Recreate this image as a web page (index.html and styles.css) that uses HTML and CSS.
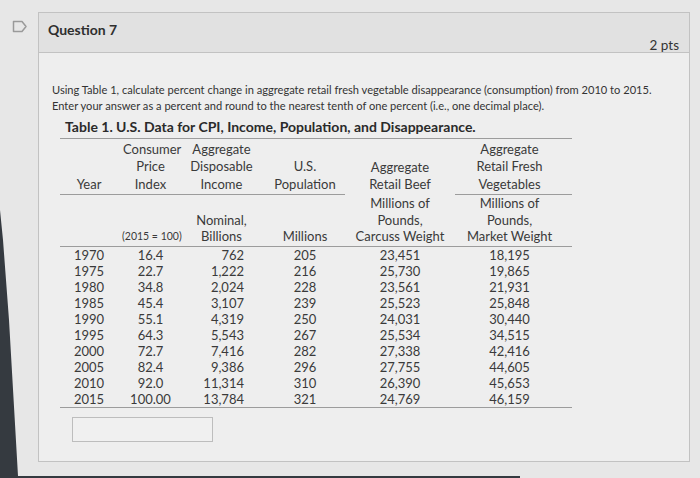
FILE: index.html
```html
<!DOCTYPE html>
<html>
<head>
<meta charset="utf-8">
<link rel="stylesheet" href="styles.css">
</head>
<body>
<div class="page">
  <div class="gutter">
    <svg class="flag" width="16" height="13" viewBox="0 0 16 13">
      <path d="M1.5 1.5 H10 L14 6.5 L10 11.5 H1.5 Z" fill="none" stroke="#9a9a9a" stroke-width="1.5" stroke-linejoin="round"/>
    </svg>
  </div>
  <div class="card">
    <div class="card-head">
      <span class="q-title">Question 7</span>
      <span class="q-pts">2 pts</span>
    </div>
    <div class="card-body">
      <p class="prompt">Using Table 1, calculate percent change in aggregate retail fresh vegetable disappearance (consumption) from 2010 to 2015.<br>Enter your answer as a percent and round to the nearest tenth of one percent (i.e., one decimal place).</p>
      <div class="tbl-title">Table 1. U.S. Data for CPI, Income, Population, and Disappearance.</div>
      <table class="data">
        <colgroup>
          <col class="c-year"><col class="c-cpi"><col class="c-inc"><col class="c-pop"><col class="c-beef"><col class="c-veg">
        </colgroup>
        <thead>
          <tr class="h1">
            <th>Year</th>
            <th class="cpi">Consumer<br>Price<br>Index</th>
            <th>Aggregate<br>Disposable<br>Income</th>
            <th>U.S.<br>Population</th>
            <th class="nb">Aggregate<br>Retail Beef</th>
            <th class="veg">Aggregate<br>Retail Fresh<br>Vegetables</th>
          </tr>
          <tr class="h2">
            <th></th>
            <th class="small">(2015 = 100)</th>
            <th>Nominal,<br>Billions</th>
            <th>Millions</th>
            <th>Millions of<br>Pounds,<br>Carcuss Weight</th>
            <th class="veg">Millions of<br>Pounds,<br>Market Weight</th>
          </tr>
        </thead>
        <tbody>
          <tr><td>1970</td><td class="cpi">16.4</td><td class="r">762</td><td>205</td><td>23,451</td><td class="veg">18,195</td></tr>
          <tr><td>1975</td><td class="cpi">22.7</td><td class="r">1,222</td><td>216</td><td>25,730</td><td class="veg">19,865</td></tr>
          <tr><td>1980</td><td class="cpi">34.8</td><td class="r">2,024</td><td>228</td><td>23,561</td><td class="veg">21,931</td></tr>
          <tr><td>1985</td><td class="cpi">45.4</td><td class="r">3,107</td><td>239</td><td>25,523</td><td class="veg">25,848</td></tr>
          <tr><td>1990</td><td class="cpi">55.1</td><td class="r">4,319</td><td>250</td><td>24,031</td><td class="veg">30,440</td></tr>
          <tr><td>1995</td><td class="cpi">64.3</td><td class="r">5,543</td><td>267</td><td>25,534</td><td class="veg">34,515</td></tr>
          <tr><td>2000</td><td class="cpi">72.7</td><td class="r">7,416</td><td>282</td><td>27,338</td><td class="veg">42,416</td></tr>
          <tr><td>2005</td><td class="cpi">82.4</td><td class="r">9,386</td><td>296</td><td>27,755</td><td class="veg">44,605</td></tr>
          <tr><td>2010</td><td class="cpi">92.0</td><td class="r">11,314</td><td>310</td><td>26,390</td><td class="veg">45,653</td></tr>
          <tr><td>2015</td><td class="cpi">100.00</td><td class="r">13,784</td><td>321</td><td>24,769</td><td class="veg">46,159</td></tr>
        </tbody>
      </table>
      <div class="answer"></div>
    </div>
  </div>
</div>
<svg class="shade" width="700" height="478" viewBox="0 0 700 478">
  <path d="M0 210 L3 240 L9 320 L18 476 L520 476 L520 478 L0 478 Z" fill="#353a40"/>
</svg>
</body>
</html>
```
FILE: styles.css
```css
html, body {
  margin: 0;
  padding: 0;
}
body {
  width: 700px;
  height: 478px;
  overflow: hidden;
  background: #e7e7e7;
  font-family: Lato, "Open Sans", sans-serif;
  color: #383838;
  position: relative;
}
.page {
  display: flex;
  padding-top: 12px;
}
.gutter {
  width: 38px;
  flex: none;
}
.flag {
  display: block;
  margin: 8px 0 0 12px;
}
.card {
  width: 652px;
  height: 450px;
  box-sizing: border-box;
  border: 1px solid #c2c2c2;
  background: #eeeeee;
}
.card-head {
  height: 40px;
  box-sizing: border-box;
  background: #e1e1e1;
  border-bottom: 1px solid #c2c2c2;
  display: flex;
  justify-content: space-between;
  padding: 0 10px 0 9px;
}
.q-title {
  align-self: flex-start;
  margin-top: 8px;
  font-size: 14px;
  font-weight: 700;
  color: #2f2f2f;
}
.q-pts {
  align-self: flex-end;
  margin-bottom: -1px;
  font-size: 13.5px;
  color: #333;
}
.card-body {
  padding: 29px 0 0 13px;
}
.prompt {
  margin: 0;
  font-size: 11.1px;
  line-height: 16px;
  color: #333;
  white-space: nowrap;
}
.tbl-title {
  margin: 4px 0 0 13px;
  font-size: 14px;
  font-weight: 700;
  line-height: 18px;
  height: 20px;
  color: #2a2a2a;
  white-space: nowrap;
}
.data {
  margin-left: 8px;
  border-collapse: collapse;
  table-layout: fixed;
  width: 512px;
  border-top: 1px solid #9c9c9c;
  border-bottom: 1px solid #9c9c9c;
  font-size: 13px;
  color: #3a3a3a;
}
.c-year { width: 58px; }
.c-cpi { width: 60px; }
.c-inc { width: 87px; }
.c-pop { width: 80px; }
.c-beef { width: 110px; }
.c-veg { width: 117px; }
.data th {
  font-weight: 400;
  line-height: 17.5px;
  vertical-align: bottom;
  padding: 0;
  text-align: center;
  white-space: nowrap;
}
.data tr.h1 th {
  height: 54px;
  border-bottom: 1px solid #9c9c9c;
  padding-bottom: 1px;
}
.data tr.h1 th.nb {
  border-bottom: none;
}
.data tr.h2 th {
  height: 49px;
  line-height: 16.5px;
  border-bottom: 1px solid #9c9c9c;
  padding-bottom: 1px;
}
.data th.small {
  font-size: 10.5px;
  padding-left: 4px;
}
.data .cpi {
  padding-left: 5px;
}
.data .veg {
  padding-right: 8px;
}
.data td {
  height: 16px;
  line-height: 16px;
  padding: 0;
  text-align: center;
}
.data td.r {
  text-align: right;
  padding-right: 21px;
}
.answer {
  margin: 9px 0 0 20px;
  width: 141px;
  height: 25px;
  box-sizing: border-box;
  border: 1px solid #bdbdbd;
  background: #f0f0f0;
}
.shade {
  position: absolute;
  left: 0;
  top: 0;
  pointer-events: none;
}
```
